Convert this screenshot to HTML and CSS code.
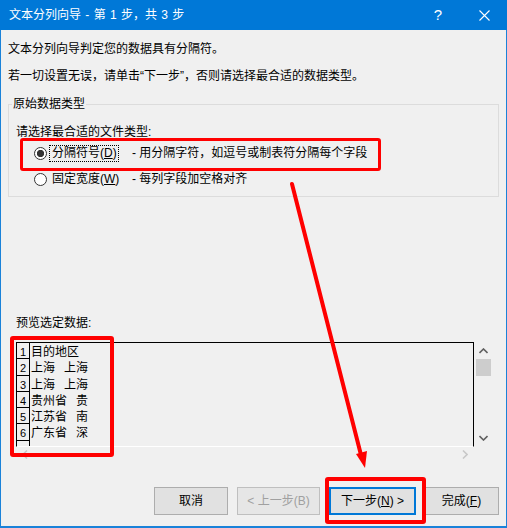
FILE: index.html
```html
<!doctype html>
<html lang="zh-CN">
<head>
	<meta charset="UTF-8">
	<title>文本分列向导</title>
	<link rel="stylesheet" href="styles.css">
</head>
<body>
	<div class="dialog">
		<div class="titlebar">
			<span class="title">文本分列向导 - 第 1 步，共 3 步</span>
			<span class="caption-btn help">?</span>
			<span class="caption-btn">
				<svg width="11" height="11" viewBox="0 0 11 11"><path d="M0.5 0.5L10.5 10.5M10.5 0.5L0.5 10.5" stroke="#fff" stroke-width="1.1" fill="none"/></svg>
			</span>
		</div>
		<div class="content">
			<p class="intro">文本分列向导判定您的数据具有分隔符。</p>
			<p class="intro">若一切设置无误，请单击“下一步”，否则请选择最合适的数据类型。</p>

			<fieldset class="group">
				<legend>原始数据类型</legend>
				<div class="prompt">请选择最合适的文件类型:</div>
				<div class="option">
					<span class="radio checked"></span>
					<span class="opt-name"><span class="focus-ring focused">分隔符号(<u>D</u>)</span></span>
					<span class="opt-desc">- 用分隔字符，如逗号或制表符分隔每个字段</span>
				</div>
				<div class="option">
					<span class="radio"></span>
					<span class="opt-name"><span class="focus-ring">固定宽度(<u>W</u>)</span></span>
					<span class="opt-desc">- 每列字段加空格对齐</span>
				</div>
			</fieldset>

			<div class="preview-label">预览选定数据:</div>
			<div class="preview">
				<div class="preview-main">
					<div class="sheet">
						<div class="row"><span class="num">1</span><span class="cell1">目的地区</span><span class="cell2"></span></div>
						<div class="row"><span class="num">2</span><span class="cell1">上海</span><span class="cell2">上海</span></div>
						<div class="row"><span class="num">3</span><span class="cell1">上海</span><span class="cell2">上海</span></div>
						<div class="row"><span class="num">4</span><span class="cell1">贵州省</span><span class="cell2">贵</span></div>
						<div class="row"><span class="num">5</span><span class="cell1">江苏省</span><span class="cell2">南</span></div>
						<div class="row"><span class="num">6</span><span class="cell1">广东省</span><span class="cell2">深</span></div>
						<div class="row"><span class="num"></span></div>
					</div>
					<div class="vscroll">
						<svg class="chev" width="9" height="6" viewBox="0 0 9 6"><path d="M0.5 5L4.5 1L8.5 5" stroke="#606060" stroke-width="1.6" fill="none"/></svg>
						<span class="thumb"></span>
						<span class="track"></span>
						<svg class="chev" width="9" height="6" viewBox="0 0 9 6"><path d="M0.5 1L4.5 5L8.5 1" stroke="#606060" stroke-width="1.6" fill="none"/></svg>
					</div>
				</div>
				<div class="hscroll">
					<svg width="6" height="9" viewBox="0 0 6 9"><path d="M5 0.5L1 4.5L5 8.5" stroke="#c8c8c8" stroke-width="1.6" fill="none"/></svg>
					<svg width="6" height="9" viewBox="0 0 6 9"><path d="M1 0.5L5 4.5L1 8.5" stroke="#c8c8c8" stroke-width="1.6" fill="none"/></svg>
				</div>
			</div>

			<div class="buttons">
				<button class="btn btn-cancel">取消</button>
				<button class="btn btn-back" disabled>&lt; 上一步(B)</button>
				<button class="btn btn-next">下一步(<u>N</u>) &gt;</button>
				<button class="btn btn-finish">完成(<u>F</u>)</button>
			</div>
		</div>

		<!-- 红色标注 -->
		<div class="mark mark-option"></div>
		<div class="mark mark-preview"></div>
		<div class="mark mark-next"></div>
		<svg class="arrow" width="507" height="528" viewBox="0 0 507 528">
			<line x1="292" y1="184" x2="361" y2="455" stroke="#ff0000" stroke-width="4" stroke-linecap="round"/>
			<polygon points="365,468 356,454 367,451" fill="#ff0000"/>
		</svg>
	</div>
</body>
</html>
```

FILE: styles.css
```css
*{
	margin:0;
	padding:0;
	box-sizing:border-box;
}
body{
	background:#fff;
	font:12px/16px "Liberation Sans","Noto Sans CJK SC",sans-serif;
	color:#000;
}
.dialog{
	position:relative;
	width:507px;
	height:528px;
	background:#f0f0f0;
	border:1px solid #1a82d9;
	border-top:none;
	border-bottom-width:2px;
}

/* 标题栏 */
.titlebar{
	display:flex;
	align-items:center;
	height:30px;
	margin:0 -1px;
	padding-left:9px;
	background:#0078d7;
	color:#fff;
}
.title{
	flex:1;
	word-spacing:1px;
}
.caption-btn{
	display:flex;
	align-items:center;
	justify-content:center;
	width:46px;
	height:30px;
}
.help{
	font-size:15px;
}

.content{
	padding:0 7px;
}
.intro{
	margin-top:11px;
}

/* 原始数据类型 */
.group{
	margin-top:12px;
	border:1px solid #dcdcdc;
	padding:0 0 4px;
}
.group legend{
	margin-left:3px;
	padding:0 1px;
}
.prompt{
	margin:12px 0 0 7px;
}
.option{
	display:flex;
	align-items:center;
	height:26px;
	padding-left:25px;
}
.radio{
	width:13px;
	height:13px;
	border:1px solid #333;
	border-radius:50%;
	background:#fff;
}
.radio.checked{
	background:radial-gradient(circle, #333 3.3px, #fff 4px);
}
.opt-name{
	width:83px;
	margin-left:2px;
}
.focus-ring{
	display:inline-block;
	border:1px dotted transparent;
	padding:0 1px 0 2px;
	line-height:15px;
}
.focus-ring.focused{
	border-color:#000;
}

/* 预览 */
.preview-label{
	margin:118px 0 0 8px;
}
.preview{
	width:475px;
	margin:11px 0 0 8px;
}
.preview-main{
	display:flex;
}
.sheet{
	width:458px;
	height:105px;
	border:1px solid #000;
	border-bottom-color:#fff;
	overflow:hidden;
}
.row{
	display:flex;
	height:16.3px;
	line-height:16px;
	white-space:nowrap;
}
.num{
	width:13px;
	border-right:1px solid #000;
	border-bottom:1px solid #000;
	text-align:center;
	padding-top:2px;
	font-size:11px;
	line-height:14px;
}
.cell1{
	width:34px;
	padding:1px 0 0 1px;
}
.cell2{
	width:24px;
	padding-top:1px;
	text-align:right;
}
.vscroll{
	display:flex;
	flex-direction:column;
	align-items:center;
	width:17px;
	height:105px;
	padding:6px 0 6px 1px;
}
.thumb{
	width:15px;
	height:17px;
	margin-top:5px;
	background:#cdcdcd;
}
.track{
	flex:1;
}
.hscroll{
	display:flex;
	justify-content:space-between;
	align-items:center;
	width:458px;
	height:15px;
	padding:0 6px;
}

/* 按钮 */
.buttons{
	display:flex;
	justify-content:flex-end;
	margin-top:25px;
}
.btn{
	height:28px;
	border:1px solid #adadad;
	background:#e1e1e1;
	font:inherit;
	color:#000;
}
.btn:disabled{
	color:#a0a0a0;
	border-color:#bfbfbf;
	background:#e6e6e6;
}
.btn-cancel{
	width:74px;
	margin-right:9px;
}
.btn-back{
	width:83px;
	margin-right:9px;
}
.btn-next{
	width:87px;
	margin-right:8px;
	border:2px solid #0078d7;
}
.btn-finish{
	width:75px;
}

/* 红色标注 */
.mark{
	position:absolute;
	border:4px solid #ff0000;
	border-radius:3px;
}
.mark-option{
	left:19px;
	top:138px;
	width:361px;
	height:33px;
	border-width:3px;
}
.mark-preview{
	left:9px;
	top:336px;
	width:104px;
	height:121px;
}
.mark-next{
	left:324px;
	top:477px;
	width:101px;
	height:47px;
}
.arrow{
	position:absolute;
	left:-1px;
	top:0;
	pointer-events:none;
}
```
